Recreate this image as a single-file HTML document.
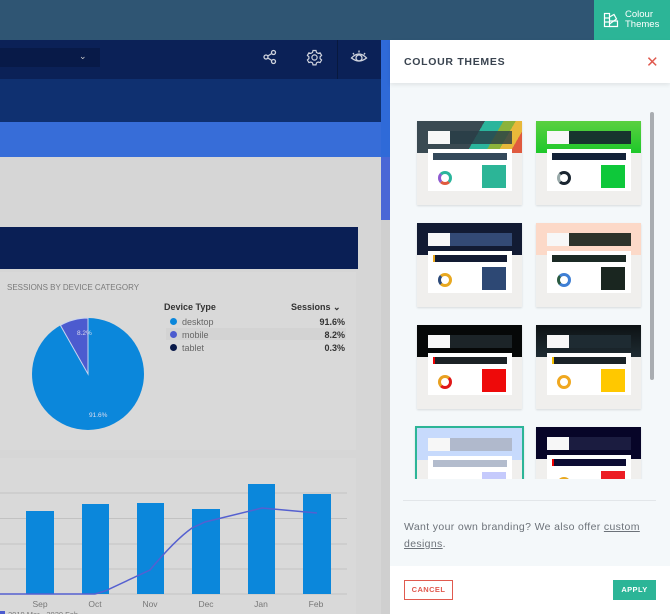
<!DOCTYPE html>
<html><head><meta charset="utf-8"><style>
*{margin:0;padding:0;box-sizing:border-box}
body{width:670px;height:614px;overflow:hidden;position:relative;font-family:"Liberation Sans",sans-serif;background:#d6d6d6}
.a{position:absolute}
.card{position:absolute;width:105px;height:84px;background:#f0efed;overflow:hidden;box-shadow:0 1px 2px rgba(0,0,0,.12)}
.card .h{position:absolute;left:0;top:0;width:105px;height:32px}
.card .w{position:absolute;left:11px;top:10px;width:22px;height:13px;background:#f7f7f7}
.card .d{position:absolute;left:33px;top:10px;width:62px;height:13px}
.card .p{position:absolute;left:11px;top:28px;width:84px;height:42px;background:#fff}
.card .b{position:absolute;left:5px;top:4px;width:74px;height:7px}
.card .s{position:absolute;left:54px;top:16px;width:24px;height:23px}
.card .r{position:absolute;left:10px;top:22px;width:14px;height:14px;border-radius:50%;border:3px solid}
</style></head><body>
<div class="a" style="left:0;top:0;width:670px;height:40px;background:#2f5573"></div>
<div class="a" style="left:594px;top:0;width:76px;height:40px;background:#2cb597"></div>
<svg class="a" style="left:603px;top:12px" width="16" height="16" viewBox="0 0 16 16" fill="none" stroke="#fff" stroke-width="1.2"><rect x="1.5" y="1.5" width="5" height="13"/><path d="M6.5 5 L11 2.5 L13.5 7 L6.5 12"/><path d="M6.5 14.5 H14.5 V9 L6.5 9"/><line x1="1.5" y1="6" x2="6.5" y2="6"/><line x1="1.5" y1="10" x2="6.5" y2="10"/></svg>
<div class="a" style="left:625px;top:10px;color:#fff;font-size:9.5px;line-height:10px">Colour<br>Themes</div>
<div class="a" style="left:0;top:40px;width:381px;height:39px;background:#0b2157"></div>
<div class="a" style="left:0;top:48px;width:100px;height:19px;background:#081a48"></div>
<div class="a" style="left:79px;top:51px;color:#ccc;font-size:9px">⌄</div>
<div class="a" style="left:337px;top:40px;width:1px;height:39px;background:#08193f"></div>
<svg class="a" style="left:262px;top:49px" width="16" height="16" viewBox="0 0 16 16" fill="none" stroke="#d0d4de" stroke-width="1.3"><circle cx="11.5" cy="3.5" r="2"/><circle cx="4" cy="8" r="2"/><circle cx="11.5" cy="12.5" r="2"/><line x1="5.8" y1="7" x2="9.8" y2="4.5"/><line x1="5.8" y1="9" x2="9.8" y2="11.5"/></svg>
<svg class="a" style="left:306px;top:49px" width="17" height="17" viewBox="0 0 17 17" fill="none" stroke="#d0d4de" stroke-width="1.2"><path d="M7 1.5h3l.5 2 1.6.9 2-.6 1.5 2.6-1.5 1.4v1.8l1.5 1.4-1.5 2.6-2-.6-1.6.9-.5 2H7l-.5-2-1.6-.9-2 .6-1.5-2.6 1.5-1.4V7.8L1.4 6.4l1.5-2.6 2 .6 1.6-.9z"/><circle cx="8.5" cy="8.5" r="2.6"/></svg>
<svg class="a" style="left:350px;top:49px" width="18" height="16" viewBox="0 0 18 16" fill="none" stroke="#d0d4de" stroke-width="1.3"><path d="M1.5 9 Q9 1 16.5 9 Q9 15 1.5 9z"/><circle cx="9" cy="9" r="3"/><path d="M3 4l1 1.5M9 1.5v2M15 4l-1 1.5"/></svg>
<div class="a" style="left:0;top:79px;width:381px;height:43px;background:#0f3070"></div>
<div class="a" style="left:0;top:122px;width:390px;height:35px;background:#376dd8"></div>
<div class="a" style="left:381px;top:40px;width:9px;height:180px;background:#2f6ad8"></div>
<div class="a" style="left:381px;top:157px;width:9px;height:63px;background:#4a67d6"></div>
<div class="a" style="left:0;top:227px;width:358px;height:42px;background:#0a1f55"></div>
<div class="a" style="left:0;top:272px;width:356px;height:178px;background:#d9d9d9"></div>
<div class="a" style="left:7px;top:283px;color:#7a7a7a;font-size:8px">SESSIONS BY DEVICE CATEGORY</div>
<svg class="a" style="left:30px;top:316px" width="116" height="116" viewBox="0 0 116 116"><circle cx="58" cy="58" r="56" fill="#0b87db"/><path d="M58 58 L58 2 A56 56 0 0 0 30.4 9.3 Z" fill="#4c5bcf" stroke="#c8d4ef" stroke-width="1"/><text x="47" y="19" font-size="6.5" fill="#dde" font-family="Liberation Sans">8.2%</text><text x="59" y="101" font-size="6.5" fill="#dde" font-family="Liberation Sans">91.6%</text></svg>
<div class="a" style="left:164px;top:302px;color:#333;font-size:9px;font-weight:bold">Device Type</div>
<div class="a" style="left:291px;top:302px;color:#333;font-size:9px;font-weight:bold">Sessions ⌄</div>
<div class="a" style="left:166px;top:328px;width:180px;height:12px;background:#d3d3d3"></div>
<div class="a" style="left:170px;top:318px;width:7px;height:7px;border-radius:50%;background:#0b87db"></div>
<div class="a" style="left:170px;top:331px;width:7px;height:7px;border-radius:50%;background:#4c5bcf"></div>
<div class="a" style="left:170px;top:344px;width:7px;height:7px;border-radius:50%;background:#0a1a4a"></div>
<div class="a" style="left:182px;top:316px;color:#666;font-size:9px;line-height:13px">desktop<br>mobile<br>tablet</div>
<div class="a" style="left:300px;top:316px;width:45px;text-align:right;color:#333;font-size:9px;font-weight:bold;line-height:13px">91.6%<br>8.2%<br>0.3%</div>
<div class="a" style="left:0;top:458px;width:356px;height:156px;background:#d9d9d9"></div>
<svg class="a" style="left:0;top:480px" width="350" height="134" viewBox="0 0 350 134">
<g stroke="#c2c2c2" stroke-width="1"><line x1="0" y1="13" x2="347" y2="13"/><line x1="0" y1="38.5" x2="347" y2="38.5"/><line x1="0" y1="64" x2="347" y2="64"/><line x1="0" y1="89" x2="347" y2="89"/><line x1="0" y1="114" x2="347" y2="114"/></g>
<g fill="#0b87db"><rect x="26" y="31" width="28" height="83"/><rect x="82" y="24" width="27" height="90"/><rect x="137" y="23" width="27" height="91"/><rect x="192" y="29" width="28" height="85"/><rect x="248" y="4" width="27" height="110"/><rect x="303" y="14" width="28" height="100"/></g>
<path d="M0 114 L95 114 L105 111 L150 90 Q175 60 192 48 L205 42 L262 28 L317 33" fill="none" stroke="#5560d0" stroke-width="1.5"/>
<g fill="#777" font-size="8.5" font-family="Liberation Sans" text-anchor="middle"><text x="40" y="127">Sep</text><text x="95" y="127">Oct</text><text x="150" y="127">Nov</text><text x="206" y="127">Dec</text><text x="261" y="127">Jan</text><text x="316" y="127">Feb</text></g>
<rect x="0" y="131" width="5" height="5" fill="#4c5bcf"/><text x="8" y="137" font-size="7.5" fill="#777" font-family="Liberation Sans">2019 Mar - 2020 Feb</text>
</svg>
<div class="a" style="left:381px;top:220px;width:9px;height:394px;background:#cfcfcf"></div>
<div class="a" style="left:390px;top:40px;width:280px;height:574px;background:#f4f8fa"></div>
<div class="a" style="left:390px;top:40px;width:280px;height:43px;background:#fff;box-shadow:0 2px 4px rgba(0,0,0,.08)"></div>
<div class="a" style="left:404px;top:56px;color:#3a4450;font-size:10.5px;font-weight:bold;letter-spacing:.7px">COLOUR THEMES</div>
<div class="a" style="left:646px;top:53px;color:#e05a4f;font-size:15px">✕</div>
<div class="a" style="left:650px;top:112px;width:4px;height:268px;background:#a9adb1;border-radius:2px"></div>
<div class="card" style="left:417px;top:121px"><div class="h" style="background:linear-gradient(120deg,#3a4a52 0,#3a4a52 55%,#2bb59c 55%,#2bb59c 70%,#8bb23a 70%,#8bb23a 80%,#e8b83a 80%,#e8b83a 90%,#e05a3f 90%)"></div><div class="w"></div><div class="d" style="background:rgba(40,60,70,.8)"></div><div class="p"><div class="b" style="background:#34495a"></div><div class="r" style="border-color:#2bb59c #2bb59c #e05a3f #8e5ad0"></div><div class="s" style="background:#2cb597"></div></div></div>
<div class="card" style="left:536px;top:121px"><div class="h" style="background:linear-gradient(#5ad040,#1ec82a)"></div><div class="w"></div><div class="d" style="background:#17352e"></div><div class="p"><div class="b" style="background:#132238"></div><div class="r" style="border-color:#1a2530 #1a2530 #1a2530 #9aa"></div><div class="s" style="background:#0ec83a"></div></div></div>
<div class="card" style="left:417px;top:223px"><div class="h" style="background:#121b33"></div><div class="w"></div><div class="d" style="background:#334a75"></div><div class="p"><div class="b" style="background:#121b33;border-left:2px solid #e8a820"></div><div class="r" style="border-color:#e8a820 #e8a820 #e8a820 #2c4a7a"></div><div class="s" style="background:#2d4874"></div></div></div>
<div class="card" style="left:536px;top:223px"><div class="h" style="background:#fcd9c8"></div><div class="w"></div><div class="d" style="background:#2c332b"></div><div class="p"><div class="b" style="background:#1b2a25"></div><div class="r" style="border-color:#3f7fd4 #3f7fd4 #3f7fd4 #2a5a40"></div><div class="s" style="background:#1a2620"></div></div></div>
<div class="card" style="left:417px;top:325px"><div class="h" style="background:#060808"></div><div class="w"></div><div class="d" style="background:#1c2428"></div><div class="p"><div class="b" style="background:#1c2226;border-left:2px solid #e00"></div><div class="r" style="border-color:#e8a020 #e01818 #e01818 #e8a020"></div><div class="s" style="background:#ee0a0a"></div></div></div>
<div class="card" style="left:536px;top:325px"><div class="h" style="background:linear-gradient(#0d1214,#1e2b32)"></div><div class="w"></div><div class="d" style="background:#1e2b32"></div><div class="p"><div class="b" style="background:#1a2328;border-left:2px solid #f5c000"></div><div class="r" style="border-color:#f0a820"></div><div class="s" style="background:#ffc800"></div></div></div>
<div class="a" style="left:390px;top:420px;width:260px;height:59px;overflow:hidden">
<div class="card" style="left:25px;top:6px;width:109px;border:2px solid #2cb597;height:70px"><div class="h" style="background:#c7dafc"></div><div class="w"></div><div class="d" style="background:#b0b9cc"></div><div class="p"><div class="b" style="background:#b3bccd"></div><div class="s" style="background:#c5cafc"></div></div></div>
<div class="card" style="left:146px;top:7px"><div class="h" style="background:#070528"></div><div class="w"></div><div class="d" style="background:#1b1c40"></div><div class="p"><div class="b" style="background:#0c0c33;border-left:2px solid #e00"></div><div class="r" style="border-color:#e8a820 #2a9"></div><div class="s" style="background:#ec1c24"></div></div></div>
</div>
<div class="a" style="left:403px;top:500px;width:253px;height:1px;background:#e2e6e9"></div>
<div class="a" style="left:404px;top:519px;color:#6c7279;font-size:10.5px;line-height:17px;letter-spacing:.35px;width:256px">Want your own branding? We also offer <span style="text-decoration:underline">custom designs</span>.</div>
<div class="a" style="left:390px;top:566px;width:280px;height:48px;background:#fff"></div>
<div class="a" style="left:404px;top:580px;width:49px;height:20px;border:1.5px solid #e05a4f;color:#e05a4f;font-size:7.5px;font-weight:bold;text-align:center;line-height:17px;letter-spacing:.4px">CANCEL</div>
<div class="a" style="left:613px;top:580px;width:43px;height:20px;background:#2cb597;color:#fff;font-size:7.5px;font-weight:bold;text-align:center;line-height:20px;letter-spacing:.4px">APPLY</div>
</body></html>
